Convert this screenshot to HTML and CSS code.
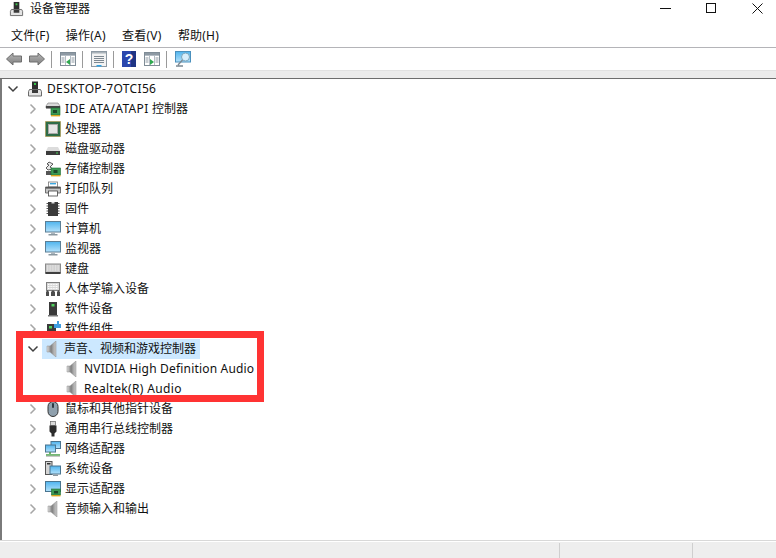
FILE: index.html
```html
<!DOCTYPE html>
<html lang="zh-CN">
<head>
<meta charset="utf-8">
<title>设备管理器</title>
<link rel="stylesheet" href="styles.css">
</head>
<body>
<svg class="defs" width="0" height="0" aria-hidden="true">
  <defs>
    <linearGradient id="spk" x1="0" x2="1" y1="0" y2="0"><stop offset="0" stop-color="#e2e2e2"/><stop offset=".45" stop-color="#7d7d7d"/><stop offset=".7" stop-color="#a8a8a8"/><stop offset="1" stop-color="#c9c9c9"/></linearGradient>
    <linearGradient id="scr" x1="0" x2="0" y1="0" y2="1"><stop offset="0" stop-color="#4fb4ee"/><stop offset="1" stop-color="#b5e2fb"/></linearGradient>
    <linearGradient id="arr" x1="0" x2="0" y1="0" y2="1"><stop offset="0" stop-color="#b5b5b5"/><stop offset="1" stop-color="#7f7f7f"/></linearGradient>
    <symbol id="pc" viewBox="0 0 16 16">
      <rect x="5" y="0.500" width="6" height="9" fill="#2e2e2e"/><rect x="7" y="2" width="2" height="2" fill="#39c24a"/>
      <path d="M2.500 8.500h11l1 2v4.500h-13v-4.500z" fill="#e4e4e4" stroke="#6a6a6a"/><rect x="5" y="9" width="6" height="3" fill="#3a3a3a"/>
    </symbol>
    <symbol id="ide" viewBox="0 0 16 16">
      <path d="M1 5l2-3h10l2 3v2H1z" fill="#d9d9d9" stroke="#777" stroke-width=".6"/><rect x="1" y="5" width="14" height="2.400" fill="#444"/>
      <rect x="6" y="7" width="9" height="7" fill="#3c9a55" stroke="#1f6b35" stroke-width=".6"/><rect x="8" y="9" width="4" height="3" fill="#1c4a2a"/><rect x="6" y="14" width="9" height="1.400" fill="#d9a520"/>
    </symbol>
    <symbol id="cpu" viewBox="0 0 16 16">
      <rect x="0.500" y="0.500" width="15" height="15" fill="#2f7048" stroke="#b08a35" stroke-dasharray="1 1"/><rect x="1.500" y="1.500" width="13" height="13" fill="#2f6b48"/><rect x="3.500" y="3.500" width="9" height="9" fill="#e6e6e6" stroke="#a8a8a8"/>
    </symbol>
    <symbol id="disk" viewBox="0 0 16 16">
      <path d="M3 6h10l2 4H1z" fill="#dcdcdc"/><rect x="1" y="10" width="14" height="4" fill="#3b3b3b"/><rect x="11" y="11.500" width="2" height="1" fill="#49d35a"/>
    </symbol>
    <symbol id="stor" viewBox="0 0 16 16">
      <path d="M4 1l4 2-3 3 3 2-5 1-2-2 3-3-2-1z" fill="#e8e8e8" stroke="#333" stroke-width=".8"/><path d="M1 10h5v4H1z" fill="#555"/>
      <rect x="6" y="7" width="9.500" height="7" fill="#3c9a55" stroke="#1f6b35" stroke-width=".6"/><rect x="8.500" y="9" width="4" height="3" fill="#1c4a2a"/><rect x="6" y="14" width="9.500" height="1.400" fill="#d9a520"/>
    </symbol>
    <symbol id="prn" viewBox="0 0 16 16">
      <rect x="3.500" y="1" width="9" height="5" fill="#fff" stroke="#777" stroke-width=".8"/><rect x="5" y="2" width="6" height="1.400" fill="#3ba7e0"/>
      <path d="M0.500 6h15v6h-15z" fill="#c6c6c6" stroke="#555" stroke-width=".8"/><rect x="1" y="6" width="14" height="1.600" fill="#555"/><rect x="3.500" y="10" width="9" height="5" fill="#fff" stroke="#444" stroke-width=".8"/>
    </symbol>
    <symbol id="chip" viewBox="0 0 16 16">
      <rect x="3" y="1" width="10" height="14" fill="#3b3b3b"/><path d="M1.500 2.500h1.500M1.500 5h1.500M1.500 7.500h1.500M1.500 10h1.500M1.500 12.500h1.500M13 2.500h1.500M13 5h1.500M13 7.500h1.500M13 10h1.500M13 12.500h1.500" stroke="#555"/><rect x="6.500" y="1" width="3" height="1.500" fill="#ddd"/>
    </symbol>
    <symbol id="mon" viewBox="0 0 16 16">
      <rect x="0.500" y="0.500" width="15" height="10.500" fill="url(#scr)" stroke="#5b7f96"/><rect x="6" y="11" width="4" height="2" fill="#aab6be"/><rect x="3.500" y="13" width="9" height="1.500" fill="#8b98a0"/>
    </symbol>
    <symbol id="kbd" viewBox="0 0 16 16">
      <rect x="0.500" y="3" width="15" height="9" fill="#c9c9c9" stroke="#8a8a8a"/><path d="M2 5h12M2 7h12M2 9h12" stroke="#f4f4f4" stroke-dasharray="1 .6"/><rect x="0.500" y="11" width="15" height="2" fill="#3f3f3f"/>
    </symbol>
    <symbol id="hid" viewBox="0 0 16 16">
      <rect x="1.500" y="1.500" width="13" height="8" fill="#d8d8d8" stroke="#808080"/><path d="M3 3.500h10M3 5.500h10M3 7.500h10" stroke="#fff" stroke-dasharray="1 .6"/>
      <path d="M1 15v-4l1.500-2 1.500 2v4zM12 15v-4l1.500-2 1.500 2v4zM6 15v-4l2-2 2 2v4z" fill="#4d4d4d"/>
    </symbol>
    <symbol id="sw" viewBox="0 0 16 16">
      <rect x="4" y="1" width="8" height="13" fill="#3a3a3a"/><rect x="6.500" y="3" width="3" height="2.500" fill="#4fd25c"/><rect x="3" y="14" width="10" height="1.500" fill="#777"/>
    </symbol>
    <symbol id="comp" viewBox="0 0 16 16">
      <rect x="2" y="3" width="9" height="13" fill="#3a3a3a"/><rect x="4" y="5" width="3" height="2.500" fill="#4fd25c"/><path d="M9 3h3V0h2v3h2v4H9z" fill="#3f9de0"/>
    </symbol>
    <symbol id="spkr" viewBox="0 0 16 16">
      <path d="M3 5h3l6-5v16l-6-5H3z" fill="url(#spk)" stroke="#8c8c8c" stroke-width=".5"/>
    </symbol>
    <symbol id="mouse" viewBox="0 0 16 16">
      <rect x="3" y="0.500" width="10" height="15" rx="5" fill="#8fa0ad" stroke="#333"/><rect x="7" y="2" width="2" height="5" rx="1" fill="#2f3a44"/>
    </symbol>
    <symbol id="usb" viewBox="0 0 16 16">
      <rect x="5.500" y="0.500" width="5" height="4" fill="#d9d9d9" stroke="#666" stroke-width=".7"/><path d="M4.500 4.500h7v6l-2 2v3h-3v-3l-2-2z" fill="#2c2c2c"/>
    </symbol>
    <symbol id="net" viewBox="0 0 16 16">
      <rect x="6" y="0.500" width="9.500" height="7" fill="url(#scr)" stroke="#4a7590"/><rect x="0.500" y="4" width="10" height="7" fill="url(#scr)" stroke="#4a7590"/>
      <path d="M5 11v2M1 14h14" stroke="#4aa14a" stroke-width="1.600"/><path d="M1 15.300h14" stroke="#bbb"/>
    </symbol>
    <symbol id="sys" viewBox="0 0 16 16">
      <rect x="0.500" y="0.500" width="6.500" height="13" fill="#d4d4d4" stroke="#555"/><rect x="2" y="2" width="3.500" height="1.500" fill="#333"/>
      <rect x="5" y="5" width="10.500" height="8" fill="url(#scr)" stroke="#4a7590"/><rect x="8" y="13.500" width="5" height="1.500" fill="#8b98a0"/>
    </symbol>
    <symbol id="disp" viewBox="0 0 16 16">
      <rect x="0.500" y="0.500" width="15" height="10" fill="url(#scr)" stroke="#4a7590"/><rect x="6.500" y="8" width="9" height="6" fill="#3c9a55" stroke="#1f6b35" stroke-width=".6"/><rect x="9" y="10" width="4" height="2.500" fill="#1c4a2a"/><rect x="6.500" y="14" width="9" height="1.400" fill="#d9a520"/>
    </symbol>
    <symbol id="win" viewBox="0 0 16 16">
      <rect x="0.500" y="1.500" width="15" height="13" fill="#fff" stroke="#7f8c96"/><rect x="1" y="2" width="14" height="2" fill="#8d99a3"/><path d="M1 4.500h14M5.500 5v9M10.500 5v9" stroke="#b3bcc4"/><path d="M1.500 7h3M1.500 9h3M1.500 11h3M11.500 7h3M11.500 9h3M11.500 11h3" stroke="#8d99a3"/>
    </symbol>
    <symbol id="chev-r" viewBox="0 0 10 12"><path d="M2.500 1.500L7 6l-4.500 4.500" fill="none" stroke="#a6a6a6" stroke-width="1.500"/></symbol>
    <symbol id="chev-d" viewBox="0 0 12 10"><path d="M1.500 2.500L6 7l4.500-4.500" fill="none" stroke="#404040" stroke-width="1.500"/></symbol>
  </defs>
</svg>

<div class="window">
  <header class="titlebar">
    <div class="title"><svg class="ti"><use href="#pc"/></svg><span>设备管理器</span></div>
    <div class="caption">
      <svg class="cap" viewBox="0 0 46 16"><path d="M22 8.500h11" stroke="#111"/></svg>
      <svg class="cap" viewBox="0 0 46 16"><rect x="22.500" y="3.500" width="9" height="9" fill="none" stroke="#111"/></svg>
      <svg class="cap" viewBox="0 0 46 16"><path d="M22.500 3.500l10 10M32.500 3.500l-10 10" fill="none" stroke="#111"/></svg>
    </div>
  </header>

  <nav class="menubar">
    <span class="menu">文件(F)</span><span class="menu">操作(A)</span><span class="menu">查看(V)</span><span class="menu">帮助(H)</span>
  </nav>

  <div class="toolbar">
    <svg class="tb tb-nav" viewBox="0 0 16 14"><path d="M0.500 7L7 1v3h8.500v6H7v3z" fill="url(#arr)" stroke="#6e6e6e"/></svg>
    <svg class="tb tb-nav" viewBox="0 0 16 14"><path d="M15.500 7L9 1v3H0.500v6H9v3z" fill="url(#arr)" stroke="#6e6e6e"/></svg>
    <i class="sep"></i>
    <svg class="tb" viewBox="0 0 16 16"><use href="#win" width="16" height="16"/><path d="M10 8v6l-4-3z" fill="#2fa84f"/></svg>
    <i class="sep"></i>
    <svg class="tb" viewBox="0 0 16 16"><rect x="0.500" y="0.500" width="15" height="15" fill="#f3f3f3" stroke="#8d99a3"/><rect x="1" y="1" width="14" height="1.500" fill="#aab3ba"/><path d="M3 5.500h10M3 7.500h10M3 9.500h10M3 11.500h10" stroke="#7d8891"/><rect x="5.500" y="14" width="5" height="1.500" fill="#2ea3e6"/></svg>
    <i class="sep"></i>
    <svg class="tb tb-help" viewBox="0 0 14 16"><rect width="14" height="16" fill="#2b47ad"/><rect x="9" width="5" height="16" fill="#1f3484"/><text class="q" x="7" y="13">?</text></svg>
    <svg class="tb" viewBox="0 0 16 16"><use href="#win" width="16" height="16"/><path d="M6 8v6l4-3z" fill="#2fa84f"/></svg>
    <i class="sep"></i>
    <svg class="tb" viewBox="0 0 16 16"><rect x="0.500" y="0.500" width="15" height="10.500" fill="url(#scr)" stroke="#4a90bd"/><circle cx="10.500" cy="6" r="4" fill="#d7eefb" stroke="#7da7bd"/><path d="M7.500 9l-4.500 5M1 15h7" stroke="#7b8790" stroke-width="1.300"/></svg>
  </div>

  <div class="band"></div>

  <main class="tree">
    <div class="row root"><svg class="chev-d"><use href="#chev-d"/></svg><svg class="ic ic-root"><use href="#pc"/></svg><span class="lat">DESKTOP-7OTCI56</span></div>
    <div class="row"><svg class="chev"><use href="#chev-r"/></svg><svg class="ic"><use href="#ide"/></svg><span><span class="lat">IDE ATA/ATAPI </span>控制器</span></div>
    <div class="row"><svg class="chev"><use href="#chev-r"/></svg><svg class="ic"><use href="#cpu"/></svg><span>处理器</span></div>
    <div class="row"><svg class="chev"><use href="#chev-r"/></svg><svg class="ic"><use href="#disk"/></svg><span>磁盘驱动器</span></div>
    <div class="row"><svg class="chev"><use href="#chev-r"/></svg><svg class="ic"><use href="#stor"/></svg><span>存储控制器</span></div>
    <div class="row"><svg class="chev"><use href="#chev-r"/></svg><svg class="ic"><use href="#prn"/></svg><span>打印队列</span></div>
    <div class="row"><svg class="chev"><use href="#chev-r"/></svg><svg class="ic"><use href="#chip"/></svg><span>固件</span></div>
    <div class="row"><svg class="chev"><use href="#chev-r"/></svg><svg class="ic"><use href="#mon"/></svg><span>计算机</span></div>
    <div class="row"><svg class="chev"><use href="#chev-r"/></svg><svg class="ic"><use href="#mon"/></svg><span>监视器</span></div>
    <div class="row"><svg class="chev"><use href="#chev-r"/></svg><svg class="ic"><use href="#kbd"/></svg><span>键盘</span></div>
    <div class="row"><svg class="chev"><use href="#chev-r"/></svg><svg class="ic"><use href="#hid"/></svg><span>人体学输入设备</span></div>
    <div class="row"><svg class="chev"><use href="#chev-r"/></svg><svg class="ic"><use href="#sw"/></svg><span>软件设备</span></div>
    <div class="row"><svg class="chev"><use href="#chev-r"/></svg><svg class="ic"><use href="#comp"/></svg><span>软件组件</span></div>
    <div class="row open"><svg class="chev-d"><use href="#chev-d"/></svg><div class="sel"><svg class="ic"><use href="#spkr"/></svg><span>声音、视频和游戏控制器</span></div></div>
    <div class="row child"><svg class="ic"><use href="#spkr"/></svg><span class="nv">NVIDIA High Definition Audio</span></div>
    <div class="row child"><svg class="ic"><use href="#spkr"/></svg><span class="lat">Realtek(R) Audio</span></div>
    <div class="row"><svg class="chev"><use href="#chev-r"/></svg><svg class="ic"><use href="#mouse"/></svg><span>鼠标和其他指针设备</span></div>
    <div class="row"><svg class="chev"><use href="#chev-r"/></svg><svg class="ic"><use href="#usb"/></svg><span>通用串行总线控制器</span></div>
    <div class="row"><svg class="chev"><use href="#chev-r"/></svg><svg class="ic"><use href="#net"/></svg><span>网络适配器</span></div>
    <div class="row"><svg class="chev"><use href="#chev-r"/></svg><svg class="ic"><use href="#sys"/></svg><span>系统设备</span></div>
    <div class="row"><svg class="chev"><use href="#chev-r"/></svg><svg class="ic"><use href="#disp"/></svg><span>显示适配器</span></div>
    <div class="row"><svg class="chev"><use href="#chev-r"/></svg><svg class="ic"><use href="#spkr"/></svg><span>音频输入和输出</span></div>
  </main>

  <footer class="status"><i class="cell c1"></i><i class="cell c2"></i><i class="cell c3"></i></footer>
  <div class="mark"></div>
</div>
</body>
</html>
```

FILE: styles.css
```css
* { box-sizing: border-box; }
html, body { margin: 0; height: 100%; }
body {
  background: #fff;
  color: #111;
  font-family: "Noto Sans", "Noto Sans CJK SC", sans-serif;
  font-size: 12px;
  overflow: hidden;
}
.defs { position: absolute; }
.window {
  position: relative;
  width: 776px;
  height: 558px;
  display: flex;
  flex-direction: column;
}

.titlebar {
  height: 26px;
  display: flex;
  justify-content: space-between;
  align-items: flex-start;
}
.title {
  display: flex;
  align-items: center;
  gap: 6px;
  padding-left: 9px;
  height: 18px;
  line-height: 18px;
}
.ti { width: 15px; height: 16px; }
.caption { display: flex; }
.cap { width: 46px; height: 16px; }

.menubar {
  height: 22px;
  display: flex;
  align-items: flex-start;
  padding-left: 3px;
  border-bottom: 1px solid #b4b4b8;
}
.menu { padding: 0 8px; line-height: 20px; letter-spacing: .2px; }
.menu + .menu { margin-left: .4px; }

.toolbar {
  height: 22px;
  display: flex;
  align-items: center;
  padding-left: 6px;
}
.tb { width: 16px; height: 16px; flex: none; margin-right: 7px; }
.tb-nav { height: 14px; }
.tb-help { width: 14px; margin-right: 8px; }
.q { font-family: "Liberation Sans", sans-serif; font-size: 14px; font-weight: bold; fill: #fff; text-anchor: middle; }
.sep { width: 1px; height: 17px; background: #9a9a9a; margin: 0 8px 0 -1px; flex: none; }

.band {
  height: 9px;
  background: #ececec;
  border-top: 1px solid #e2e2e2;
  border-bottom: 1px solid #6e6e6e;
}

.tree {
  flex: 1;
  border-left: 2px solid #7a7a7a;
}
.row {
  height: 20px;
  display: flex;
  align-items: center;
  padding-left: 26px;
  white-space: nowrap;
  line-height: 20px;
}
.lat { letter-spacing: .35px; }
.nv { letter-spacing: .18px; }
.root { padding-left: 5px; }
.ic-root { margin-right: 3px; }
.child { padding-left: 62px; }
.chev { width: 10px; height: 12px; margin-right: 7px; flex: none; }
.chev-d { width: 12px; height: 10px; margin-right: 8px; flex: none; }
.row.open { padding-left: 25px; }
.row.open .chev-d { margin-right: 3px; }
.ic { width: 16px; height: 16px; margin-right: 4px; flex: none; }
.sel {
  display: flex;
  align-items: center;
  height: 20px;
  padding: 0 4px 0 2px;
  background: #cce8ff;
}

.status {
  height: 18px;
  display: flex;
  background: #eeeeee;
  border-top: 1px solid #d8d8d8;
  box-shadow: inset 0 1px 0 #fff;
}
.cell { display: block; border-right: 1px solid #cfcfcf; margin-top: 2px; }
.c1 { width: 560px; }
.c2 { width: 133px; }
.c3 { flex: 1; border-right: 0; }

.mark {
  position: absolute;
  left: 16px;
  top: 331px;
  width: 248px;
  height: 71px;
  border: 7px solid #ff3333;
  pointer-events: none;
}
```
